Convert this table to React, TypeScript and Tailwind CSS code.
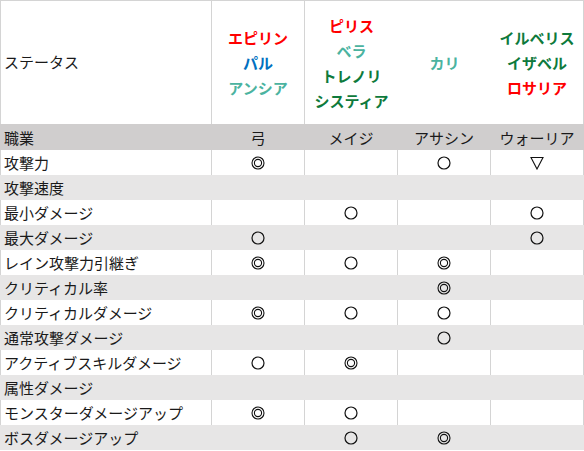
import React from "react";

type Row = { label: string; cells: string[]; tone: "head" | "white" | "gray" };

const rows: Row[] = [
  { label: "職業", cells: ["弓", "メイジ", "アサシン", "ウォーリア"], tone: "head" },
  { label: "攻撃力", cells: ["◎", "", "○", "▽"], tone: "white" },
  { label: "攻撃速度", cells: ["", "", "", ""], tone: "gray" },
  { label: "最小ダメージ", cells: ["", "○", "", "○"], tone: "white" },
  { label: "最大ダメージ", cells: ["○", "", "", "○"], tone: "gray" },
  { label: "レイン攻撃力引継ぎ", cells: ["◎", "○", "◎", ""], tone: "white" },
  { label: "クリティカル率", cells: ["", "", "◎", ""], tone: "gray" },
  { label: "クリティカルダメージ", cells: ["◎", "○", "○", ""], tone: "white" },
  { label: "通常攻撃ダメージ", cells: ["", "", "○", ""], tone: "gray" },
  { label: "アクティブスキルダメージ", cells: ["○", "◎", "", ""], tone: "white" },
  { label: "属性ダメージ", cells: ["", "", "", ""], tone: "gray" },
  { label: "モンスターダメージアップ", cells: ["◎", "○", "", ""], tone: "white" },
  { label: "ボスダメージアップ", cells: ["", "○", "◎", ""], tone: "gray" },
];

const RED = "text-[#ff0000]";
const BLUE = "text-[#0070c0]";
const TEAL = "text-[#4bb3a0]";
const GREEN = "text-[#0e7a3c]";

const chars: { name: string; color: string }[][] = [
  [
    { name: "エピリン", color: RED },
    { name: "パル", color: BLUE },
    { name: "アンシア", color: TEAL },
  ],
  [
    { name: "ピリス", color: RED },
    { name: "ベラ", color: TEAL },
    { name: "トレノリ", color: GREEN },
    { name: "システィア", color: GREEN },
  ],
  [{ name: "カリ", color: TEAL }],
  [
    { name: "イルベリス", color: GREEN },
    { name: "イザベル", color: GREEN },
    { name: "ロサリア", color: RED },
  ],
];

const toneClass = {
  head: "bg-[#d0cece] border-[#d0cece] h-[26px]",
  white: "bg-white border-[#d4d4d4] h-[25px]",
  gray: "bg-[#e7e6e6] border-[#e7e6e6] h-[25px]",
};

// rating marks drawn as svg so they stay crisp and dark
function Mark({ kind }: { kind: string }) {
  if (kind === "○")
    return (
      <svg width="14" height="14" viewBox="0 0 14 14" className="mt-[1px]">
        <circle cx="7" cy="7" r="6" fill="none" stroke="#111" strokeWidth="1.2" />
      </svg>
    );
  if (kind === "◎")
    return (
      <svg width="14" height="14" viewBox="0 0 14 14" className="mt-[1px]">
        <circle cx="7" cy="7" r="6" fill="none" stroke="#111" strokeWidth="1.1" />
        <circle cx="7" cy="7" r="3.6" fill="none" stroke="#111" strokeWidth="1.1" />
      </svg>
    );
  if (kind === "▽")
    return (
      <svg width="14" height="14" viewBox="0 0 14 14" className="mt-[1px]">
        <path d="M1 1.5 H13 L7 13 Z" fill="none" stroke="#111" strokeWidth="1.1" strokeLinejoin="miter" />
      </svg>
    );
  return <>{kind}</>;
}

export default function App() {
  return (
    <div
      className="w-[584px] h-[451px] overflow-hidden bg-white text-[15px] text-[#1a1a1a]"
      style={{ fontFamily: '"Noto Sans CJK JP", "Noto Sans", sans-serif' }}
    >
      <div className="border-t border-[#d4d4d4]">
        <div className="flex h-[123px]">
          <div className="w-[212px] border-l border-r border-[#d4d4d4] flex items-center pl-[3px]">
            ステータス
          </div>
          {chars.map((col, i) => (
            <div
              key={i}
              className={`w-[93px] flex flex-col items-center justify-center font-bold leading-[25px] ${
                i === 0 || i === 3 ? "border-r border-[#d4d4d4]" : ""
              }`}
            >
              {col.map((c) => (
                <div key={c.name} className={c.color}>
                  {c.name}
                </div>
              ))}
            </div>
          ))}
        </div>

        {rows.map((r) => (
          <div key={r.label} className={`flex ${toneClass[r.tone]}`}>
            <div className="w-[212px] border-l border-r border-inherit flex items-center pl-[3px] leading-none">
              {r.label}
            </div>
            {r.cells.map((c, i) => (
              <div
                key={i}
                className="w-[93px] border-r border-inherit flex items-center justify-center leading-none"
              >
                <Mark kind={c} />
              </div>
            ))}
          </div>
        ))}
      </div>
    </div>
  );
}
